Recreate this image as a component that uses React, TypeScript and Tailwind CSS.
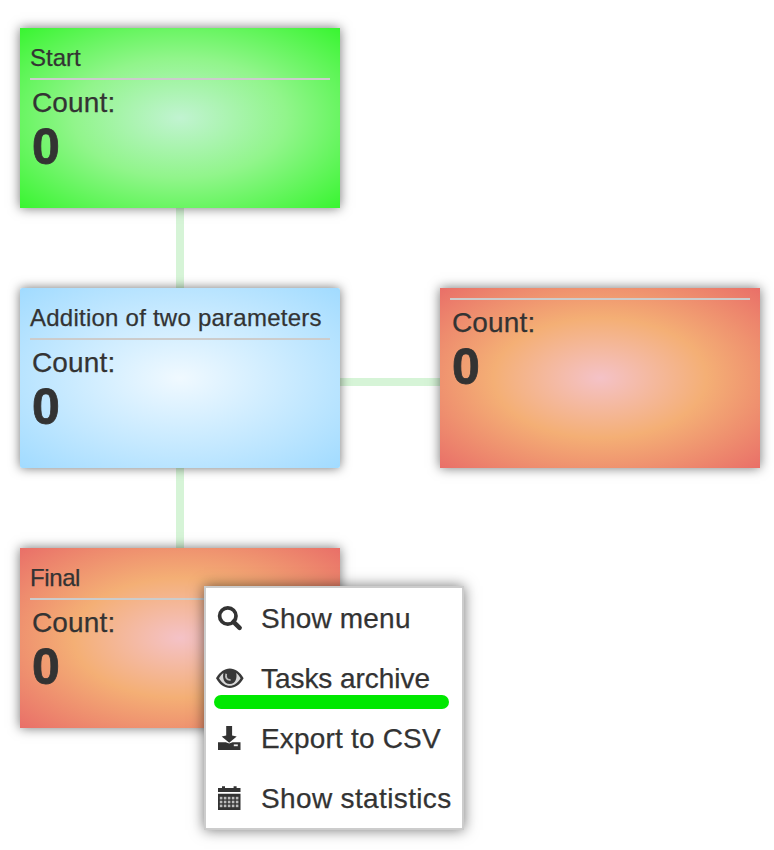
import type { ReactNode } from 'react';

type NodeProps = { title?: string; tracking?: string; place: string; fill: string };

function StateNode({ title, tracking = '', place, fill }: NodeProps) {
  return (
    <section
      className={`absolute h-[180px] w-[320px] px-[10px] pt-[10px] shadow-[0_0_11px_rgba(0,0,0,0.55)] ${place} ${fill}`}
    >
      {title && <h2 className={`h-[40px] text-[24px] leading-[40px] whitespace-nowrap ${tracking}`}>{title}</h2>}
      <div className="h-[2px] bg-[#ccc]" />
      <div className="pl-[2px]">
        <p className="pt-[3px] text-[28px] leading-[40px] tracking-[0.15px]">Count:</p>
        <p className="-mt-[1px] text-[50px] leading-[50px] font-bold [-webkit-text-stroke:0.8px_#333]">0</p>
      </div>
    </section>
  );
}

function SearchIcon() {
  return (
    <svg width="28" height="28" viewBox="0 0 28 28" fill="none" stroke="#333">
      <circle cx="11.8" cy="12" r="8.2" strokeWidth="3.7" />
      <path d="M17.5 17.8 23.6 23.8" strokeWidth="4.6" strokeLinecap="round" />
    </svg>
  );
}

function EyeIcon() {
  return (
    <svg width="28" height="28" viewBox="0 0 28 28" fill="none">
      <path d="M0 14.3C3.6 8 8.5 4.5 13.8 4.5S24 8 27.6 14.3C24 20.7 19.1 24 13.8 24S3.6 20.7 0 14.3Z" fill="#383838" />
      <path d="M3 14.3c1.2-2.2 2.7-4 4.4-5.2-1 4.7.3 11 6.4 11s7.4-6.3 6.4-11c1.7 1.2 3.2 3 4.4 5.2-3 4.9-6.6 7.5-10.8 7.5S6 19.2 3 14.3Z" fill="#d8d8d8" />
      <path d="M10.2 9.8c-.9 4 .7 6.5 4.4 6.1" stroke="#bbb" strokeWidth="1.8" />
    </svg>
  );
}

function DownloadIcon() {
  return (
    <svg width="28" height="28" viewBox="0 0 28 28" fill="#333">
      <path d="M10.2 2h5.9v9.4l4.6 1.2-7.5 6.2-7.5-6.2 4.5-1.2Z" />
      <path d="M2 18.2h7.8l3.4 1.4 3.4-1.4h7.9v7.9H2Z" />
      <path d="M17.8 20.4h4v1.8h-4Z" fill="#eee" />
    </svg>
  );
}

function CalendarIcon() {
  const columns = [3.8, 7.8, 11.8, 15.8, 19.8];
  const rows = [12.8, 16.7, 20.6];
  return (
    <svg width="28" height="28" viewBox="0 0 28 28" fill="#333">
      <path d="M2 4h4V2.2h3V4h8.6V2.2h3V4h3.9v3.9H2ZM2 9.8h22.5V26H2Z" />
      {rows.map((y) => columns.map((x) => <rect key={`${x}-${y}`} x={x} y={y} width="2.6" height="2.6" fill="#bbb" />))}
    </svg>
  );
}

function MenuItem({ icon, tracking, children }: { icon: ReactNode; tracking: string; children: ReactNode }) {
  return (
    <li className="flex h-[60px] items-center pl-[10px] text-[28px] leading-[40px] whitespace-nowrap">
      <span className="mr-[17px] w-[28px] shrink-0">{icon}</span>
      <span className={`pt-[1px] ${tracking}`}>{children}</span>
    </li>
  );
}

export default function App() {
  const red = 'bg-[radial-gradient(ellipse_at_center,#f4c2c7_0%,#f4af75_47%,#e96f68_100%)]';
  return (
    <main className="relative h-[850px] w-[774px] overflow-hidden bg-white font-['Liberation_Sans',Arial,sans-serif] text-[#333] [-webkit-text-stroke:0.25px_#333]">
      <div className="absolute top-[200px] left-[176px] h-[360px] w-[8px] bg-[#d6f4d7]" />
      <div className="absolute top-[378px] left-[330px] h-[8px] w-[120px] bg-[#d6f4d7]" />

      <StateNode
        title="Start"
        place="top-[28px] left-[20px]"
        fill="bg-[radial-gradient(ellipse_at_center,#c1f3d1_0%,#91f58b_47%,#38f530_100%)]"
      />
      <StateNode
        title="Addition of two parameters"
        tracking="tracking-[0.24px]"
        place="top-[288px] left-[20px] rounded-[2px]"
        fill="bg-[radial-gradient(ellipse_at_center,#f0f9ff_0%,#cbebff_47%,#a1dbff_100%)]"
      />
      <StateNode place="top-[288px] left-[440px]" fill={red} />
      <StateNode title="Final" tracking="tracking-[-0.4px]" place="top-[548px] left-[20px]" fill={red} />

      <ul className="absolute top-[586px] left-[204px] w-[260px] border-2 border-[#ccc] bg-white shadow-[0_0_13px_rgba(0,0,0,0.55)]">
        <MenuItem tracking="tracking-[0.2px]" icon={<SearchIcon />}>Show menu</MenuItem>
        <MenuItem tracking="tracking-[-0.05px]" icon={<EyeIcon />}>Tasks archive</MenuItem>
        <MenuItem tracking="tracking-[0.18px]" icon={<DownloadIcon />}>Export to CSV</MenuItem>
        <MenuItem tracking="tracking-[0.36px]" icon={<CalendarIcon />}>Show statistics</MenuItem>
        <li aria-hidden="true" className="absolute top-[107px] left-[8px] h-[14px] w-[235px] rounded-full bg-[#00e800]" />
      </ul>
    </main>
  );
}
